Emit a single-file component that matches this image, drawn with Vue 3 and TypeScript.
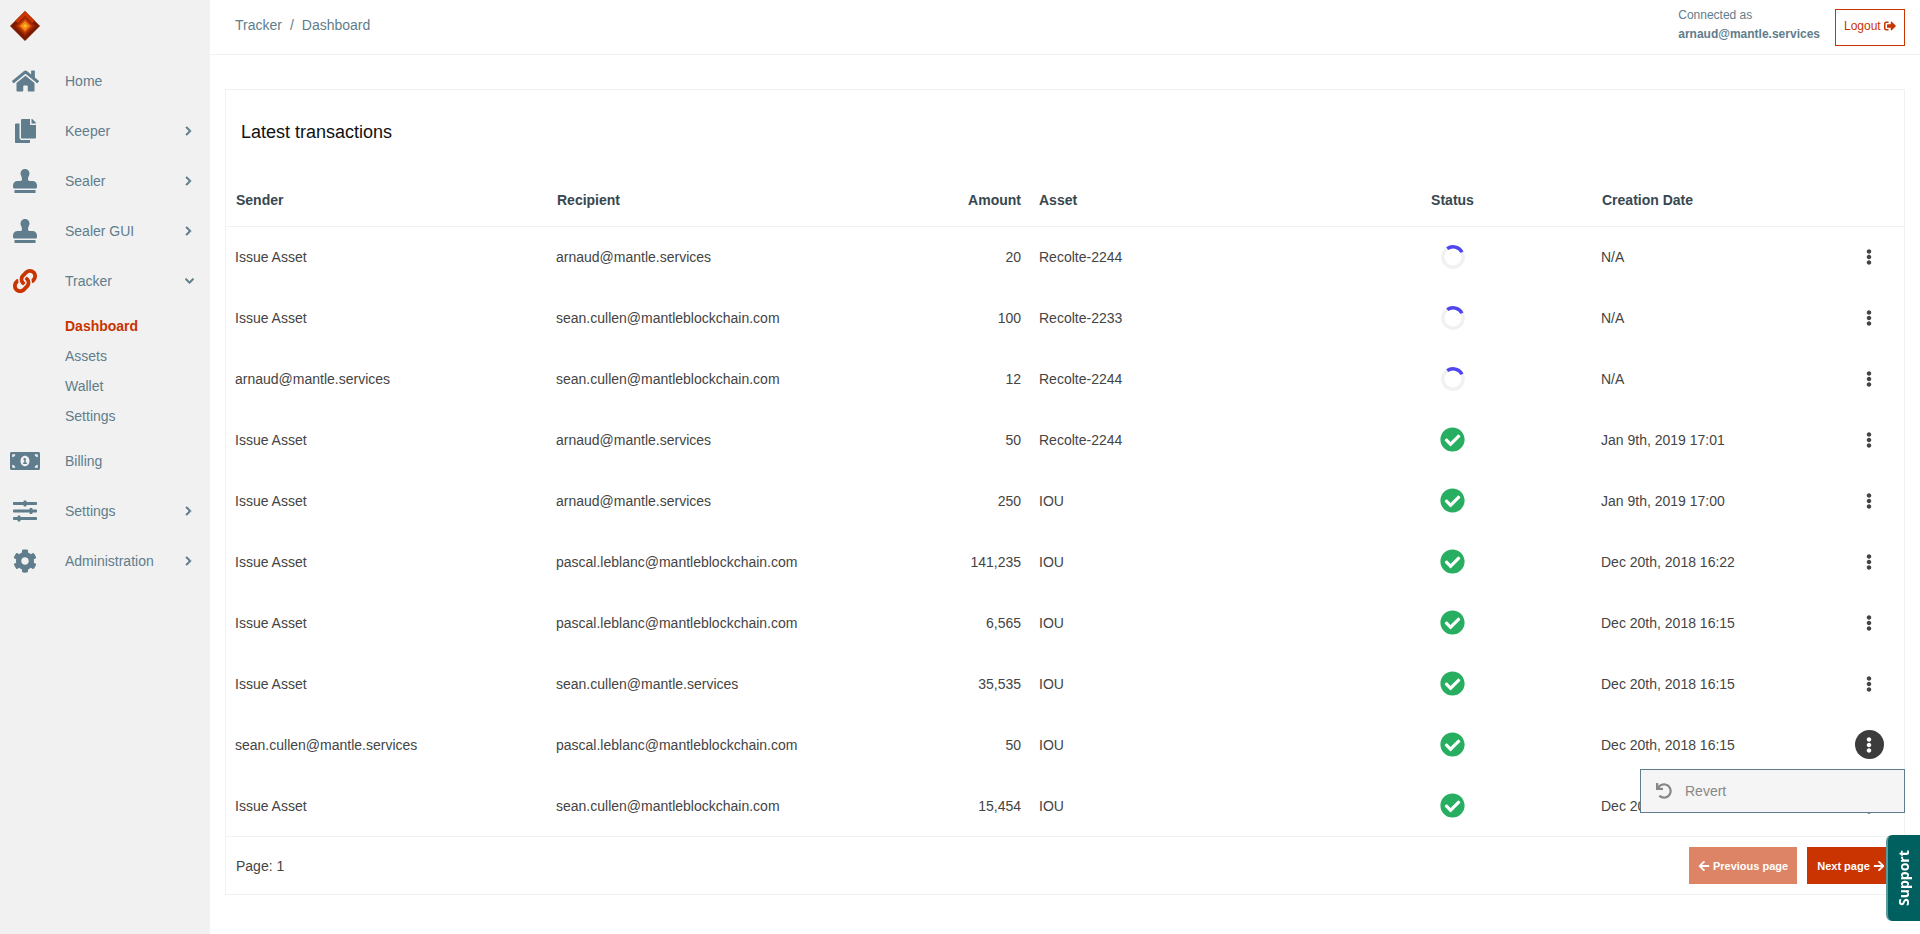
<template>
  <div class="layout">
    <aside class="sidebar">
      <div class="logo">
        <svg width="30" height="30" viewBox="0 0 30 30">
          <polygon points="15,0 30,15 15,30 0,15" fill="#7a1c02" />
          <polygon points="15,0 25,10 22,12 15,5 8,12 5,10" fill="#c93400" />
          <polygon points="15,5 25,15 15,25 5,15" fill="#a32a00" />
          <polygon points="15,8 22,15 15,22 8,15" fill="#d9480a" />
          <polygon points="15,10 20,15 15,20 10,15" fill="#f08a14" />
          <polygon points="15,13 17,15 15,17 13,15" fill="#ffc21e" />
        </svg>
      </div>
      <template v-for="item in menu" :key="item.label">
        <div class="menu-item">
          <span class="menu-icon">
            <svg :width="item.w" height="24" :viewBox="`0 0 ${item.vw} 512`" :fill="item.active ? '#c93400' : '#5f7d8c'">
              <path :d="item.d" />
            </svg>
          </span>
          <span class="menu-label">{{ item.label }}</span>
          <svg v-if="item.arrow === 'right'" class="chev" width="7" height="10" viewBox="0 0 320 512" fill="#5f7d8c" stroke="#5f7d8c" stroke-width="30">
            <path :d="chevronRight" />
          </svg>
          <svg v-if="item.arrow === 'down'" class="chev chev-down" width="9" height="10" viewBox="0 0 448 512" fill="#5f7d8c" stroke="#5f7d8c" stroke-width="30">
            <path :d="chevronDown" />
          </svg>
        </div>
        <div v-if="item.children" class="submenu">
          <div v-for="(sub, i) in item.children" :key="sub" class="sub-item" :class="{ current: i === 0 }">{{ sub }}</div>
        </div>
      </template>
    </aside>

    <div class="main">
      <header class="topbar">
        <div class="crumbs">Tracker<span class="sep">/</span>Dashboard</div>
        <div class="user">
          <div class="user-text">
            <div>Connected as</div>
            <div class="user-mail">arnaud@mantle.services</div>
          </div>
          <button class="logout">
            Logout
            <svg width="12" height="12" viewBox="0 0 512 512" fill="#c93400">
              <path :d="signOut" />
            </svg>
          </button>
        </div>
      </header>

      <section class="card">
        <h2 class="card-title">Latest transactions</h2>
        <table class="tx-table">
          <colgroup>
            <col style="width: 321px" />
            <col style="width: 340px" />
            <col style="width: 142px" />
            <col style="width: 284px" />
            <col style="width: 279px" />
            <col style="width: 249px" />
            <col />
          </colgroup>
          <thead>
            <tr>
              <th>Sender</th>
              <th>Recipient</th>
              <th class="amount">Amount</th>
              <th>Asset</th>
              <th class="status">Status</th>
              <th>Creation Date</th>
              <th></th>
            </tr>
          </thead>
          <tbody>
            <tr v-for="(tx, i) in transactions" :key="i">
              <td>{{ tx.sender }}</td>
              <td>{{ tx.recipient }}</td>
              <td class="amount">{{ tx.amount }}</td>
              <td class="asset">{{ tx.asset }}</td>
              <td class="status">
                <svg v-if="tx.pending" class="status-icon" width="24" height="26" viewBox="0 0 24 26">
                  <circle cx="12" cy="13" r="10.2" fill="none" stroke="#f1f1f1" stroke-width="3.4" />
                  <path d="M6.2 4.6 A10.2 10.2 0 0 1 21 8.2" fill="none" stroke="#4f46f0" stroke-width="3.4" />
                </svg>
                <svg v-else class="status-icon" width="25" height="25" viewBox="0 0 512 512" fill="#27ae60">
                  <path :d="checkCircle" />
                </svg>
              </td>
              <td>{{ tx.date }}</td>
              <td class="actions">
                <span class="dots" :class="{ open: i === 8 }">
                  <svg width="6" height="16" viewBox="0 0 192 512" :fill="i === 8 ? '#fff' : '#444'">
                    <path :d="ellipsis" />
                  </svg>
                </span>
                <div v-if="i === 8" class="dropdown">
                  <svg width="16" height="16" viewBox="0 0 512 512" fill="#888">
                    <path :d="undo" />
                  </svg>
                  <span>Revert</span>
                </div>
              </td>
            </tr>
          </tbody>
        </table>
        <footer class="card-footer">
          <span>Page: 1</span>
          <div class="pager">
            <button class="page-btn prev">
              <svg width="12" height="12" viewBox="0 0 448 512" fill="#fff"><path :d="arrowLeft" /></svg>
              Previous page
            </button>
            <button class="page-btn next">
              Next page
              <svg width="12" height="12" viewBox="0 0 448 512" fill="#fff"><path :d="arrowRight" /></svg>
            </button>
          </div>
        </footer>
      </section>
    </div>

    <div class="support">Support</div>
  </div>
</template>

<script setup lang="ts">
interface MenuItem {
  label: string
  d: string
  vw: number
  w: number
  arrow?: 'right' | 'down'
  active?: boolean
  children?: string[]
}

interface Tx {
  sender: string
  recipient: string
  amount: string
  asset: string
  date: string
  pending?: boolean
}

const chevronRight = 'M285.476 272.971L91.132 467.314c-9.373 9.373-24.569 9.373-33.941 0l-22.667-22.667c-9.357-9.357-9.375-24.522-.04-33.901L188.505 256 34.484 101.255c-9.335-9.379-9.317-24.544.04-33.901l22.667-22.667c9.373-9.373 24.569-9.373 33.941 0L285.475 239.03c9.373 9.372 9.373 24.568.001 33.941z'
const chevronDown = 'M207.029 381.476L12.686 187.132c-9.373-9.373-9.373-24.569 0-33.941l22.667-22.667c9.357-9.357 24.522-9.375 33.901-.04L224 284.505l154.745-154.021c9.379-9.335 24.544-9.317 33.901.04l22.667 22.667c9.373 9.373 9.373 24.569 0 33.941L240.971 381.476c-9.373 9.372-24.569 9.372-33.942 0z'
const signOut = 'M497 273L329 441c-15 15-41 4.5-41-17v-96H152c-13.3 0-24-10.7-24-24v-96c0-13.3 10.7-24 24-24h136V88c0-21.4 25.9-32 41-17l168 168c9.3 9.4 9.3 24.6 0 34zM192 436v-40c0-6.6-5.4-12-12-12H96c-17.7 0-32-14.3-32-32V160c0-17.7 14.3-32 32-32h84c6.6 0 12-5.4 12-12V76c0-6.6-5.4-12-12-12H96c-53 0-96 43-96 96v192c0 53 43 96 96 96h84c6.6 0 12-5.4 12-12z'
const checkCircle = 'M504 256c0 136.967-111.033 248-248 248S8 392.967 8 256 119.033 8 256 8s248 111.033 248 248zM227.314 387.314l184-184c6.248-6.248 6.248-16.379 0-22.627l-22.627-22.627c-6.248-6.249-16.379-6.249-22.628 0L216 308.118l-70.059-70.059c-6.248-6.248-16.379-6.248-22.628 0l-22.627 22.627c-6.248 6.248-6.248 16.379 0 22.627l104 104c6.249 6.25 16.379 6.25 22.628.001z'
const ellipsis = 'M96 184c39.8 0 72 32.2 72 72s-32.2 72-72 72-72-32.2-72-72 32.2-72 72-72zM24 80c0 39.8 32.2 72 72 72s72-32.2 72-72S135.8 8 96 8 24 40.2 24 80zm0 352c0 39.8 32.2 72 72 72s72-32.2 72-72-32.2-72-72-72-72 32.2-72 72z'
const undo = 'M212.333 224.333H12c-6.627 0-12-5.373-12-12V12C0 5.373 5.373 0 12 0h48c6.627 0 12 5.373 12 12v78.112C117.773 39.279 184.26 7.47 258.175 8.007c136.906.994 246.448 111.623 246.157 248.532C504.041 393.258 393.12 504 256.333 504c-64.089 0-122.496-24.313-166.51-64.215-5.099-4.622-5.334-12.554-.467-17.42l33.967-33.967c4.474-4.474 11.662-4.717 16.401-.525C170.76 415.336 211.58 432 256.333 432c97.268 0 176-78.716 176-176 0-97.267-78.716-176-176-176-58.496 0-110.28 28.476-142.274 72.333h98.274c6.627 0 12 5.373 12 12v48c0 6.627-5.373 12-12 12z'
const arrowLeft = 'M257.5 445.1l-22.2 22.2c-9.4 9.4-24.6 9.4-33.9 0L7 273c-9.4-9.4-9.4-24.6 0-33.9L201.4 44.7c9.4-9.4 24.6-9.4 33.9 0l22.2 22.2c9.5 9.5 9.3 25-.4 34.3L136.6 216H424c13.3 0 24 10.7 24 24v32c0 13.3-10.7 24-24 24H136.6l120.5 114.8c9.8 9.3 10 24.8.4 34.3z'
const arrowRight = 'M190.5 66.9l22.2-22.2c9.4-9.4 24.6-9.4 33.9 0L441 239c9.4 9.4 9.4 24.6 0 33.9L246.6 467.3c-9.4 9.4-24.6 9.4-33.9 0l-22.2-22.2c-9.5-9.5-9.3-25 .4-34.3L311.4 296H24c-13.3 0-24-10.7-24-24v-32c0-13.3 10.7-24 24-24h287.4L190.9 101.2c-9.8-9.3-10-24.8-.4-34.3z'

const home = 'M280.37 148.26L96 300.11V464a16 16 0 0 0 16 16l112.06-.29a16 16 0 0 0 15.92-16V368a16 16 0 0 1 16-16h64a16 16 0 0 1 16 16v95.64a16 16 0 0 0 16 16.05L464 480a16 16 0 0 0 16-16V300L295.67 148.26a12.19 12.19 0 0 0-15.3 0zM571.6 251.47L488 182.56V44.05a12 12 0 0 0-12-12h-56a12 12 0 0 0-12 12v72.61L318.47 43a48 48 0 0 0-61 0L4.34 251.47a12 12 0 0 0-1.6 16.9l25.5 31A12 12 0 0 0 45.15 301l235.22-193.74a12.19 12.19 0 0 1 15.3 0L530.9 301a12 12 0 0 0 16.9-1.6l25.5-31a12 12 0 0 0-1.7-16.93z'
const copy = 'M320 448v40c0 13.255-10.745 24-24 24H24c-13.255 0-24-10.745-24-24V120c0-13.255 10.745-24 24-24h72v296c0 30.879 25.121 56 56 56h168zm0-344V0H152c-13.255 0-24 10.745-24 24v368c0 13.255 10.745 24 24 24h272c13.255 0 24-10.745 24-24V128H344c-13.2 0-24-10.8-24-24zm120.971-31.029L375.029 7.029A24 24 0 0 0 358.059 0H352v96h96v-6.059a24 24 0 0 0-7.029-16.97z'
const stamp = 'M32 512h448v-64H32v64zm384-256h-66.56c-16.26 0-29.44-13.18-29.44-29.44v-9.46c0-27.37 8.88-53.41 21.46-77.72 9.11-17.61 12.9-38.39 9.05-60.42-6.77-38.78-38.47-70.7-77.26-77.45C212.62-9.04 160 37.33 160 96c0 14.16 3.12 27.54 8.69 39.58C182.02 164.43 192 194.7 192 226.49v.07c0 16.26-13.18 29.44-29.44 29.44H96c-53.02 0-96 42.98-96 96v32c0 17.67 14.33 32 32 32h448c17.67 0 32-14.33 32-32v-32c0-53.02-42.98-96-96-96z'
const link = 'M326.612 185.391c59.747 59.809 58.927 155.698.36 214.59-.11.12-.24.25-.36.37l-67.2 67.2c-59.27 59.27-155.699 59.262-214.96 0-59.27-59.26-59.27-155.7 0-214.96l37.106-37.106c9.84-9.84 26.786-3.3 27.294 10.606.648 17.722 3.826 35.527 9.69 52.721 1.986 5.822.567 12.262-3.783 16.612l-13.087 13.087c-28.026 28.026-28.905 73.66-1.155 101.96 28.024 28.579 74.086 28.749 102.325.51l67.2-67.19c28.191-28.191 28.073-73.757 0-101.83-3.701-3.694-7.429-6.564-10.341-8.569a16.037 16.037 0 0 1-6.947-12.606c-.396-10.567 3.348-21.456 11.698-29.806l21.054-21.055c5.521-5.521 14.182-6.199 20.584-1.731a152.482 152.482 0 0 1 20.522 17.197zM467.547 44.449c-59.261-59.262-155.69-59.27-214.96 0l-67.2 67.2c-.12.12-.25.25-.36.37-58.566 58.892-59.387 154.781.36 214.59a152.454 152.454 0 0 0 20.521 17.196c6.402 4.468 15.064 3.789 20.584-1.731l21.054-21.055c8.35-8.35 12.094-19.239 11.698-29.806a16.037 16.037 0 0 0-6.947-12.606c-2.912-2.005-6.64-4.875-10.341-8.569-28.073-28.073-28.191-73.639 0-101.83l67.2-67.19c28.239-28.239 74.3-28.069 102.325.51 27.75 28.3 26.872 73.934-1.155 101.96l-13.087 13.087c-4.35 4.35-5.769 10.79-3.783 16.612 5.864 17.194 9.042 34.999 9.69 52.721.509 13.906 17.454 20.446 27.294 10.606l37.106-37.106c59.271-59.259 59.271-155.699.001-214.959z'
const money = 'M352 288h-16v-88c0-4.42-3.58-8-8-8h-13.58c-4.74 0-9.37 1.4-13.31 4.03l-15.33 10.22a7.994 7.994 0 0 0-2.22 11.09l8.88 13.31a7.994 7.994 0 0 0 11.09 2.22l.47-.31V288h-16c-4.42 0-8 3.58-8 8v16c0 4.42 3.58 8 8 8h64c4.42 0 8-3.58 8-8v-16c0-4.42-3.58-8-8-8zM608 64H32C14.33 64 0 78.33 0 96v320c0 17.67 14.33 32 32 32h576c17.67 0 32-14.33 32-32V96c0-17.67-14.33-32-32-32zM48 400v-64c35.35 0 64 28.65 64 64H48zm0-224v-64h64c0 35.35-28.65 64-64 64zm272 192c-53.02 0-96-50.15-96-112 0-61.86 42.98-112 96-112s96 50.14 96 112c0 61.87-43 112-96 112zm272 32h-64c0-35.35 28.65-64 64-64v64zm0-224c-35.35 0-64-28.65-64-64h64v64z'
const sliders = 'M496 384H160v-16c0-8.8-7.2-16-16-16h-32c-8.8 0-16 7.2-16 16v16H16c-8.8 0-16 7.2-16 16v32c0 8.8 7.2 16 16 16h80v16c0 8.8 7.2 16 16 16h32c8.8 0 16-7.2 16-16v-16h336c8.8 0 16-7.2 16-16v-32c0-8.8-7.2-16-16-16zm0-160h-80v-16c0-8.8-7.2-16-16-16h-32c-8.8 0-16 7.2-16 16v16H16c-8.8 0-16 7.2-16 16v32c0 8.8 7.2 16 16 16h336v16c0 8.8 7.2 16 16 16h32c8.8 0 16-7.2 16-16v-16h80c8.8 0 16-7.2 16-16v-32c0-8.8-7.2-16-16-16zm0-160H288V48c0-8.8-7.2-16-16-16h-32c-8.8 0-16 7.2-16 16v16H16C7.2 64 0 71.2 0 80v32c0 8.8 7.2 16 16 16h208v16c0 8.8 7.2 16 16 16h32c8.8 0 16-7.2 16-16v-16h208c8.8 0 16-7.2 16-16V80c0-8.8-7.2-16-16-16z'
const cog = 'M487.4 315.7l-42.6-24.6c4.3-23.2 4.3-47 0-70.2l42.6-24.6c4.9-2.8 7.1-8.6 5.5-14-11.1-35.6-30-67.8-54.7-94.6-3.8-4.1-10-5.1-14.8-2.3L380.8 110c-17.9-15.4-38.5-27.3-60.8-35.1V25.8c0-5.6-3.9-10.5-9.4-11.7-36.7-8.2-74.3-7.8-109.2 0-5.5 1.2-9.4 6.1-9.4 11.7V75c-22.2 7.9-42.8 19.8-60.8 35.1L88.7 85.5c-4.9-2.8-11-1.9-14.8 2.3-24.7 26.7-43.6 58.9-54.7 94.6-1.7 5.4.6 11.2 5.5 14L67.3 221c-4.3 23.2-4.3 47 0 70.2l-42.6 24.6c-4.9 2.8-7.1 8.6-5.5 14 11.1 35.6 30 67.8 54.7 94.6 3.8 4.1 10 5.1 14.8 2.3l42.6-24.6c17.9 15.4 38.5 27.3 60.8 35.1v49.2c0 5.6 3.9 10.5 9.4 11.7 36.7 8.2 74.3 7.8 109.2 0 5.5-1.2 9.4-6.1 9.4-11.7v-49.2c22.2-7.9 42.8-19.8 60.8-35.1l42.6 24.6c4.9 2.8 11 1.9 14.8-2.3 24.7-26.7 43.6-58.9 54.7-94.6 1.5-5.5-.7-11.3-5.6-14.1zM256 336c-44.1 0-80-35.9-80-80s35.9-80 80-80 80 35.9 80 80-35.9 80-80 80z'

const menu: MenuItem[] = [
  { label: 'Home', d: home, vw: 576, w: 27 },
  { label: 'Keeper', d: copy, vw: 448, w: 21, arrow: 'right' },
  { label: 'Sealer', d: stamp, vw: 512, w: 24, arrow: 'right' },
  { label: 'Sealer GUI', d: stamp, vw: 512, w: 24, arrow: 'right' },
  { label: 'Tracker', d: link, vw: 512, w: 24, arrow: 'down', active: true, children: ['Dashboard', 'Assets', 'Wallet', 'Settings'] },
  { label: 'Billing', d: money, vw: 640, w: 30 },
  { label: 'Settings', d: sliders, vw: 512, w: 24, arrow: 'right' },
  { label: 'Administration', d: cog, vw: 512, w: 24, arrow: 'right' }
]

const arnaud = 'arnaud@mantle.services'
const seanBc = 'sean.cullen@mantleblockchain.com'
const seanMs = 'sean.cullen@mantle.services'
const pascal = 'pascal.leblanc@mantleblockchain.com'

const transactions: Tx[] = [
  { sender: 'Issue Asset', recipient: arnaud, amount: '20', asset: 'Recolte-2244', date: 'N/A', pending: true },
  { sender: 'Issue Asset', recipient: seanBc, amount: '100', asset: 'Recolte-2233', date: 'N/A', pending: true },
  { sender: arnaud, recipient: seanBc, amount: '12', asset: 'Recolte-2244', date: 'N/A', pending: true },
  { sender: 'Issue Asset', recipient: arnaud, amount: '50', asset: 'Recolte-2244', date: 'Jan 9th, 2019 17:01' },
  { sender: 'Issue Asset', recipient: arnaud, amount: '250', asset: 'IOU', date: 'Jan 9th, 2019 17:00' },
  { sender: 'Issue Asset', recipient: pascal, amount: '141,235', asset: 'IOU', date: 'Dec 20th, 2018 16:22' },
  { sender: 'Issue Asset', recipient: pascal, amount: '6,565', asset: 'IOU', date: 'Dec 20th, 2018 16:15' },
  { sender: 'Issue Asset', recipient: seanMs, amount: '35,535', asset: 'IOU', date: 'Dec 20th, 2018 16:15' },
  { sender: seanMs, recipient: pascal, amount: '50', asset: 'IOU', date: 'Dec 20th, 2018 16:15' },
  { sender: 'Issue Asset', recipient: seanBc, amount: '15,454', asset: 'IOU', date: 'Dec 20th, 2018 16:15' }
]
</script>

<style>
html,
body {
  margin: 0;
  background: #fff;
}
</style>

<style scoped>
.layout {
  display: flex;
  min-height: 934px;
  font-family: "Liberation Sans", Arial, sans-serif;
  font-size: 14px;
  color: #444;
}

.sidebar {
  width: 210px;
  flex-shrink: 0;
  background: #f1f1f1;
}

.logo {
  height: 56px;
  padding: 11px 0 0 10px;
  box-sizing: border-box;
}

.logo svg {
  display: block;
}

.menu-item {
  display: flex;
  align-items: center;
  height: 50px;
  padding: 0 16px 0 10px;
  color: #5f7d8c;
}

.menu-icon {
  display: flex;
  justify-content: center;
  width: 30px;
  margin-right: 25px;
}

.menu-label {
  flex: 1;
}

.chev {
  margin-right: 2px;
}

.chev-down {
  margin-right: 0;
}

.submenu {
  padding: 5px 0;
}

.sub-item {
  height: 30px;
  line-height: 30px;
  padding-left: 65px;
  color: #5f7d8c;
}

.sub-item.current {
  color: #c93400;
  font-weight: bold;
}

.main {
  flex: 1;
  min-width: 0;
}

.topbar {
  display: flex;
  align-items: center;
  justify-content: space-between;
  height: 54px;
  padding: 0 15px 0 25px;
  border-bottom: 1px solid #f1f1f1;
  color: #5f7d8c;
}

.crumbs {
  padding-bottom: 4px;
}

.sep {
  margin: 0 8px;
}

.user {
  display: flex;
  align-items: center;
  gap: 15px;
  font-size: 12px;
}

.user-text {
  margin-bottom: 4px;
  line-height: 19px;
}

.user-mail {
  font-weight: bold;
}

.logout {
  display: flex;
  align-items: center;
  gap: 3px;
  width: 70px;
  height: 37px;
  padding: 0 0 3px 8px;
  border: 1px solid #c93400;
  background: #fff;
  color: #c93400;
  font-family: inherit;
  font-size: 12px;
}

.card {
  margin: 34px 15px 0;
  border: 1px solid #f1f1f1;
  height: 806px;
  box-sizing: border-box;
}

.card-title {
  margin: 0;
  height: 85px;
  padding: 26px 0 0 15px;
  box-sizing: border-box;
  font-size: 18px;
  line-height: 32px;
  font-weight: normal;
  color: #111;
}

.tx-table {
  width: 100%;
  table-layout: fixed;
  border-collapse: collapse;
}

.tx-table th {
  height: 51px;
  padding: 0 10px;
  text-align: left;
  color: #37474f;
  border-bottom: 1px solid #f1f1f1;
  box-sizing: border-box;
}

.tx-table td {
  height: 61px;
  padding: 0 9px;
  box-sizing: border-box;
}

.tx-table .amount {
  text-align: right;
  padding-right: 8px;
}

.tx-table td.asset {
  padding-left: 10px;
}

.tx-table .status {
  text-align: center;
}

.status-icon {
  display: block;
  margin: 0 auto;
}

.tx-table .actions {
  position: relative;
  padding: 0 7px 0 0;
  text-align: center;
}

.dots {
  display: inline-flex;
  align-items: center;
  justify-content: center;
  width: 29px;
  height: 29px;
  border-radius: 50%;
  vertical-align: middle;
}

.dots.open {
  background: #3c3c3c;
}

.dropdown {
  position: absolute;
  top: 55px;
  right: -1px;
  z-index: 2;
  display: flex;
  align-items: center;
  gap: 13px;
  width: 265px;
  height: 44px;
  padding-left: 15px;
  box-sizing: border-box;
  border: 1px solid #5f7d8c;
  background: #f5f5f5;
  color: #888;
  text-align: left;
}

.card-footer {
  display: flex;
  align-items: center;
  justify-content: space-between;
  height: 58px;
  padding: 0 9px 0 10px;
  box-sizing: border-box;
  border-top: 1px solid #f1f1f1;
}

.pager {
  display: flex;
  gap: 10px;
}

.page-btn {
  display: flex;
  align-items: center;
  justify-content: center;
  gap: 3px;
  height: 37px;
  padding: 0;
  border: 0;
  background: #c93400;
  color: #fff;
  font-family: inherit;
  font-size: 11px;
  font-weight: bold;
}

.page-btn.prev {
  width: 108px;
  background: #dd8466;
}

.page-btn.next {
  width: 88px;
}

.support {
  position: fixed;
  top: 835px;
  right: 0;
  width: 34px;
  height: 86px;
  box-sizing: border-box;
  display: flex;
  align-items: center;
  justify-content: center;
  writing-mode: vertical-rl;
  transform: rotate(180deg);
  border-right: 2px solid #5c9a9a;
  border-radius: 0 6px 6px 0;
  background: #00605f;
  color: #fff;
  font-family: "Open Sans", sans-serif;
  font-size: 14px;
  font-weight: bold;
}
</style>
